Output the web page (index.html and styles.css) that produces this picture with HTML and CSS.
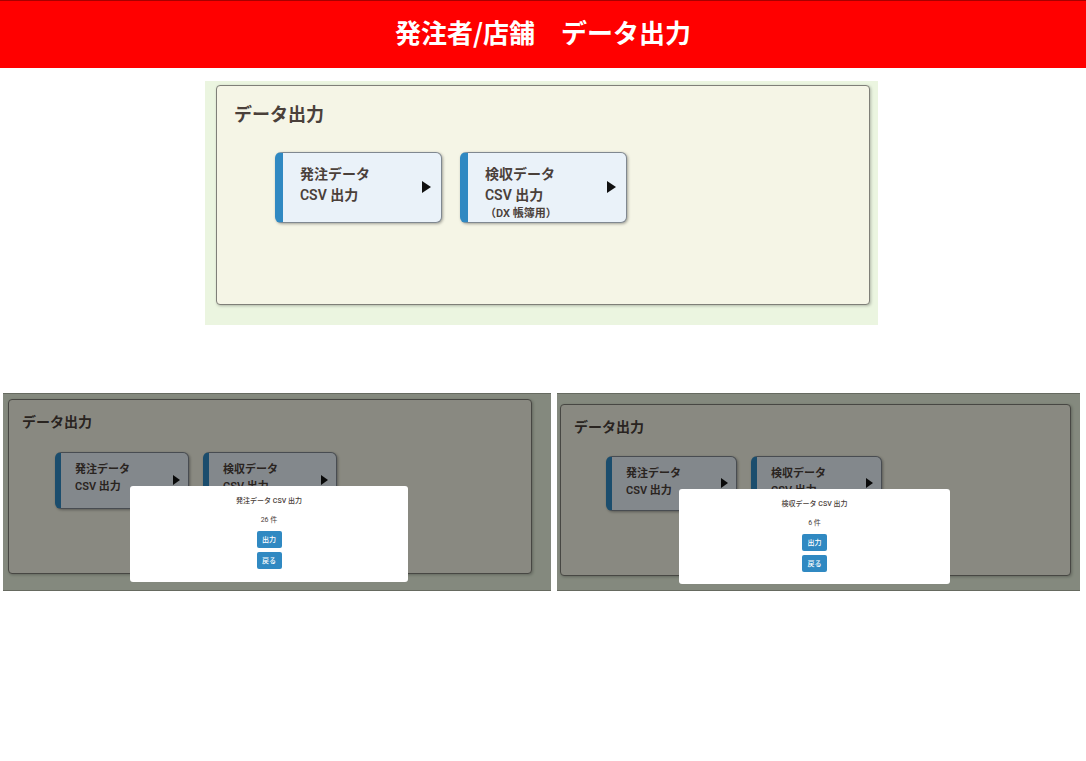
FILE: index.html
```html
<!DOCTYPE html>
<html lang="ja">
<head>
<meta charset="UTF-8">
<meta name="viewport" content="width=device-width, initial-scale=1.0">
<title>発注者/店舗 データ出力</title>
<link rel="stylesheet" href="styles.css">
</head>
<body>

<header class="page-header">
  <h1>発注者/店舗　データ出力</h1>
</header>

<main>
  <!-- Menu screen -->
  <section class="screen screen-menu">
    <div class="panel">
      <h2>データ出力</h2>
      <div class="cards">
        <button type="button" class="card">
          <span>発注データ</span>
          <span>CSV 出力</span>
        </button>
        <button type="button" class="card">
          <span>検収データ</span>
          <span>CSV 出力</span>
          <span class="card-note">（DX 帳簿用）</span>
        </button>
      </div>
    </div>
  </section>

  <!-- Confirm dialogs -->
  <div class="dialog-row">
    <section class="screen screen-small screen-order">
      <div class="panel">
        <h2>データ出力</h2>
        <div class="cards">
          <button type="button" class="card">
            <span>発注データ</span>
            <span>CSV 出力</span>
          </button>
          <button type="button" class="card">
            <span>検収データ</span>
            <span>CSV 出力</span>
          </button>
        </div>
      </div>
      <div class="overlay"></div>
      <div class="dialog" role="dialog">
        <h3>発注データ CSV 出力</h3>
        <p>26 件</p>
        <button type="button" class="btn">出力</button>
        <button type="button" class="btn">戻る</button>
      </div>
    </section>

    <section class="screen screen-small screen-inspect">
      <div class="panel">
        <h2>データ出力</h2>
        <div class="cards">
          <button type="button" class="card">
            <span>発注データ</span>
            <span>CSV 出力</span>
          </button>
          <button type="button" class="card">
            <span>検収データ</span>
            <span>CSV 出力</span>
          </button>
        </div>
      </div>
      <div class="overlay"></div>
      <div class="dialog" role="dialog">
        <h3>検収データ CSV 出力</h3>
        <p>6 件</p>
        <button type="button" class="btn">出力</button>
        <button type="button" class="btn">戻る</button>
      </div>
    </section>
  </div>
</main>

</body>
</html>
```

FILE: styles.css
```css
* {
  box-sizing: border-box;
}
body {
  margin: 0;
  background-color: white;
  color: #4a403a;
  font-family: Roboto, "Noto Sans CJK JP", sans-serif;
}
h1, h2, h3, p {
  margin: 0;
}
button {
  font-family: inherit;
  cursor: pointer;
}
main {
  padding: 0 6px 0 3px;
}
.page-header {
  height: 68px;
  padding-top: 12px;
  background-color: #ff0000;
  border-top: 1px solid #a80000;
  color: white;
  text-align: center;
}
.page-header h1 {
  font-family: "Noto Sans CJK JP", sans-serif;
  font-size: 26px;
  font-weight: 700;
  line-height: 38px;
}
.screen {
  position: relative;
  background-color: #ebf5e0;
}
.screen-menu {
  width: 62.5%;
  margin: 13px auto 0;
  padding: 4px 8px 20px 11px;
}
.panel {
  min-height: 220px;
  padding: 15px 17px;
  background-color: #f5f5e6;
  border: 1px solid #7f7f78;
  border-radius: 4px;
  box-shadow: 1px 1px 3px rgba(0, 0, 0, 0.25);
}
.panel h2 {
  font-size: 18px;
  font-weight: 600;
  line-height: 28px;
}
.cards {
  display: flex;
  gap: 18px;
  margin-top: 23px;
  padding-left: 41px;
}
.card {
  position: relative;
  display: flex;
  flex-direction: column;
  align-items: flex-start;
  width: 167px;
  height: 71px;
  padding: 11px 0 0 17px;
  background-color: #eaf2f9;
  border: 1px solid #808890;
  border-left: 8px solid #3089c2;
  border-radius: 6px;
  box-shadow: 1px 1px 3px rgba(0, 0, 0, 0.35);
  color: #4a403a;
  font-size: 14px;
  font-weight: 600;
  line-height: 21px;
}
/* Arrow on the right side of the card */
.card::after {
  content: "";
  position: absolute;
  top: 50%;
  right: 10px;
  margin-top: -7px;
  border: solid transparent;
  border-width: 6px 0 6px 9px;
  border-left-color: #111111;
}
.card-note {
  font-size: 11px;
  line-height: 16px;
}
.dialog-row {
  display: grid;
  grid-template-columns: 548fr 523fr;
  gap: 6px;
  margin-top: 68px;
}
.screen-order {
  padding: 6px 19px 17px 5px;
}
.screen-inspect {
  padding: 11px 9px 15px 3px;
}
.screen-small .panel {
  min-height: 175px;
  padding: 12px 13px;
}
.screen-small .panel h2 {
  font-size: 14px;
  line-height: 20px;
}
.screen-small .cards {
  gap: 14px;
  margin-top: 20px;
  padding-left: 33px;
}
.screen-small .card {
  width: 134px;
  height: 57px;
  padding: 8px 0 0 14px;
  border-left-width: 6px;
  font-size: 11px;
  line-height: 17px;
}
.screen-small .card::after {
  right: 8px;
  margin-top: -6px;
  border-width: 5px 0 5px 7px;
}
.screen-inspect .panel {
  min-height: 172px;
}
.screen-inspect .cards {
  margin-top: 19px;
  padding-left: 32px;
}
.screen-inspect .card {
  width: 131px;
  height: 55px;
}
.overlay {
  position: absolute;
  inset: 0;
  background-color: rgba(0, 0, 0, 0.44);
  border: solid #666a60;
  border-width: 1px 0;
}
.dialog {
  position: absolute;
  top: 93px;
  right: 143px;
  left: 127px;
  display: flex;
  flex-direction: column;
  align-items: center;
  padding: 9px 0 13px;
  background-color: white;
  border-radius: 3px;
}
.dialog h3 {
  font-size: 7px;
  font-weight: 500;
  line-height: 12px;
}
.dialog p {
  margin: 7px 0 5px;
  font-size: 7px;
  line-height: 12px;
}
.btn {
  width: 25px;
  height: 17px;
  margin-bottom: 4px;
  padding: 0;
  background-color: #3089c2;
  border: none;
  border-radius: 2px;
  color: white;
  font-size: 7px;
  font-weight: 500;
  line-height: 16px;
}
.btn:last-child {
  margin-bottom: 0;
}
.screen-inspect .dialog {
  top: 96px;
  right: 130px;
  left: 122px;
  padding-bottom: 12px;
}
```
